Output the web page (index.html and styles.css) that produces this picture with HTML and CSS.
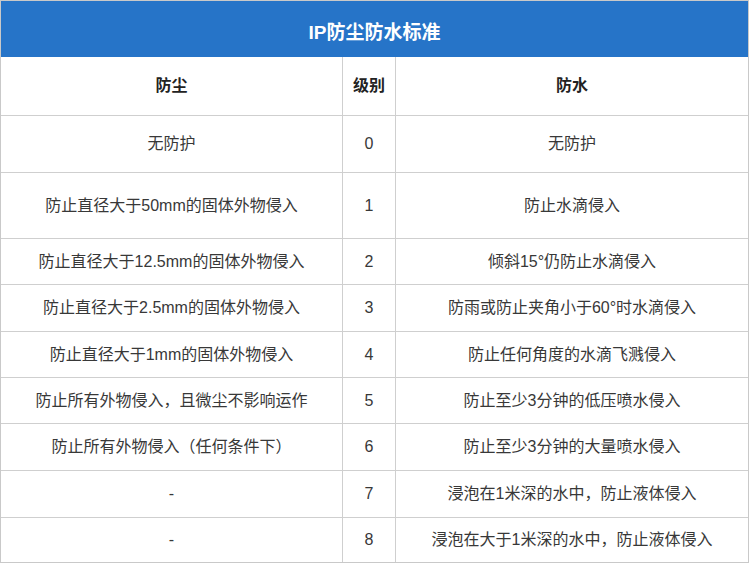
FILE: index.html
```html
<!DOCTYPE html>
<html lang="zh-CN">
<head>
<meta charset="utf-8">
<title>IP防尘防水标准</title>
<link rel="stylesheet" href="styles.css">
</head>
<body>
<div class="sheet">
  <div class="title">IP防尘防水标准</div>
  <div class="grid">
    <div class="cell head h-head">防尘</div><div class="cell head h-head">级别</div><div class="cell head h-head last">防水</div>

    <div class="cell r0">无防护</div><div class="cell r0">0</div><div class="cell r0 last">无防护</div>
    <div class="cell r1">防止直径大于50mm的固体外物侵入</div><div class="cell r1">1</div><div class="cell r1 last">防止水滴侵入</div>
    <div class="cell r2">防止直径大于12.5mm的固体外物侵入</div><div class="cell r2">2</div><div class="cell r2 last">倾斜15°仍防止水滴侵入</div>
    <div class="cell r3">防止直径大于2.5mm的固体外物侵入</div><div class="cell r3">3</div><div class="cell r3 last">防雨或防止夹角小于60°时水滴侵入</div>
    <div class="cell r4">防止直径大于1mm的固体外物侵入</div><div class="cell r4">4</div><div class="cell r4 last">防止任何角度的水滴飞溅侵入</div>
    <div class="cell r5">防止所有外物侵入，且微尘不影响运作</div><div class="cell r5">5</div><div class="cell r5 last">防止至少3分钟的低压喷水侵入</div>
    <div class="cell r6">防止所有外物侵入（任何条件下）</div><div class="cell r6">6</div><div class="cell r6 last">防止至少3分钟的大量喷水侵入</div>
    <div class="cell r7">-</div><div class="cell r7">7</div><div class="cell r7 last">浸泡在1米深的水中，防止液体侵入</div>
    <div class="cell r8 bottom">-</div><div class="cell r8 bottom">8</div><div class="cell r8 bottom last">浸泡在大于1米深的水中，防止液体侵入</div>
  </div>
</div>
</body>
</html>
```
FILE: styles.css
```css
* { box-sizing: border-box; }
html, body {
  margin: 0;
  padding: 0;
  background: #ffffff;
}
body {
  font-family: "Liberation Sans", "Noto Sans CJK SC", sans-serif;
  color: #383838;
  font-size: 16px;
}
.sheet {
  width: 749px;
  height: 563px;
  border: 1px solid #c9c9c9;
}
.title {
  height: 56px;
  padding-top: 2px;
  background: #2674c8;
  color: #ffffff;
  font-weight: bold;
  font-size: 19px;
  display: flex;
  align-items: center;
  justify-content: center;
}
.grid {
  display: grid;
  grid-template-columns: 342px 53px 352px;
}
.cell {
  display: flex;
  align-items: center;
  justify-content: center;
  text-align: center;
  border-right: 1px solid #cfcfcf;
  border-bottom: 1px solid #cfcfcf;
  line-height: 1.2;
}
.cell.last { border-right: none; }
.cell.bottom { border-bottom: none; }
.head {
  font-weight: bold;
  color: #222222;
}
.h-head { height: 59px; }
.r0 { height: 57px; }
.r1 { height: 66px; }
.r2 { height: 46px; }
.r3 { height: 47px; }
.r4 { height: 46px; }
.r5 { height: 46px; }
.r6 { height: 47px; }
.r7 { height: 47px; }
.r8 { height: 44px; }
```
